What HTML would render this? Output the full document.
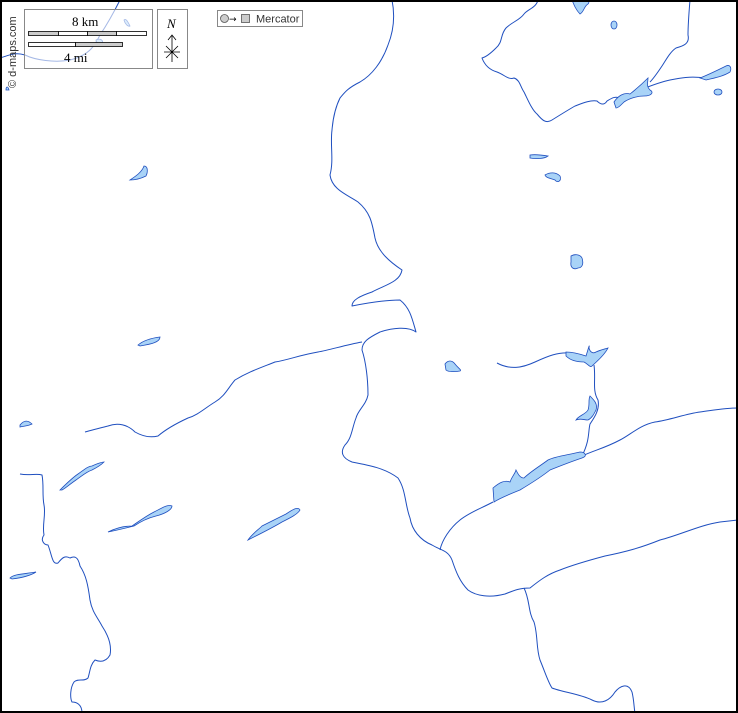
<!DOCTYPE html>
<html><head><meta charset="utf-8"><style>
html,body{margin:0;padding:0;background:#fff}
svg{display:block}
</style></head><body>
<svg width="738" height="713" viewBox="0 0 738 713" xmlns="http://www.w3.org/2000/svg">
<rect x="0" y="0" width="738" height="713" fill="#fff"/>
<g fill="none" stroke="#1f4fbf" stroke-width="1" stroke-linejoin="round">
<!-- main river -->
<path d="M392,0 C395,15 394,30 388,45 C382,62 372,75 360,82 C348,88 345,92 340,98 C335,108 333,118 332,130 C330,145 334,160 330,175 C332,190 348,195 358,202 C370,212 372,222 375,238 C378,252 390,262 402,270 C400,282 385,285 372,292 C360,296 352,300 352,306 C362,304 385,300 400,300 C410,308 412,318 416,332 C408,326 392,328 380,332 C368,338 362,342 362,350 C366,362 368,380 368,395 C366,405 358,410 356,418 C352,428 352,438 345,445 C340,452 342,458 352,462 C368,465 385,468 398,478 C406,490 405,505 410,518 C412,530 420,540 432,545 C440,550 448,550 452,560 C456,572 460,582 468,590 C476,596 490,598 505,594 C515,590 520,588 530,588 C540,580 548,574 560,570 C575,564 590,560 605,556 C625,552 640,548 660,540 C680,535 700,525 720,522 L738,520"/>
<!-- left branch -->
<path d="M362,342 C345,345 330,350 318,352 C300,355 288,360 275,362 C260,368 248,372 235,380 C228,388 225,396 215,402 C205,408 198,415 188,418 C175,424 165,430 158,436 C150,438 142,436 135,432 C128,425 118,422 108,426 C100,428 92,430 85,432"/>
<!-- lower-right river -->
<path d="M440,550 C442,540 450,528 460,520 C470,512 482,508 493,502"/>
<path d="M582,456 C595,450 605,448 620,440 C630,435 640,425 655,422 C670,420 685,414 700,412 C715,410 725,408 738,408"/>
<path d="M497,363 C510,370 522,368 535,362 C548,356 558,352 570,353"/>
<path d="M594,365 C596,380 592,390 598,400 C600,410 594,418 590,424 C588,432 590,440 582,456"/>
<!-- top right rivers -->
<path d="M538,0 C536,8 528,9 524,14 C520,20 512,22 506,28 C500,35 503,42 496,48 C490,54 486,57 482,58 C485,66 490,70 497,72 C505,75 508,80 514,78 C520,80 520,86 524,92 C528,100 532,110 537,114 C542,120 546,124 552,120 C560,115 568,110 575,106 C583,103 590,100 597,101 C600,104 604,106 607,101 C612,98 615,96 620,98"/>
<path d="M690,0 C689,12 688,25 688,35 C690,44 683,46 676,48 C670,52 666,60 662,66 C658,72 654,78 650,82"/>
<path d="M640,90 C650,86 660,82 670,80 C680,78 690,76 705,78"/>
<!-- bottom-left river -->
<path d="M20,474 C30,476 36,473 42,475 C44,485 42,495 44,505 C46,515 42,525 44,535 C40,540 44,545 48,545 C52,555 52,565 58,563 C62,558 65,555 70,558 C74,556 78,556 80,566 C86,575 88,585 90,600 C92,612 98,618 102,626 C108,635 112,645 110,655 C106,662 100,662 95,660 C90,665 90,672 88,678 C84,682 78,678 74,682 C70,688 70,698 72,702 C76,702 82,704 82,713"/>
<!-- bottom river -->
<path d="M524,588 C530,600 528,612 534,622 C538,635 536,648 540,660 C545,672 548,682 552,688 C562,692 580,694 592,700 C602,705 610,700 615,692 C620,686 628,682 632,692 C634,700 634,708 635,713"/>
<!-- top small river in legend -->
<path d="M120,0 C115,10 110,20 100,35 C95,45 90,55 70,60 C55,63 35,60 25,55 C15,52 10,55 0,58"/>
</g>
<g fill="#a9d3f7" stroke="#1f4fbf" stroke-width="0.8">
<path d="M493,488 C500,482 505,480 510,482 C512,476 515,474 516,470 C518,474 520,478 524,478 C530,472 540,466 548,460 C556,456 568,455 580,452 C585,452 588,456 582,458 C570,462 560,466 550,470 C540,478 530,484 520,490 C510,494 500,498 494,502 Z"/>
<path d="M566,352 C572,352 580,354 586,356 C588,350 590,342 589,348 C590,352 593,354 596,352 C600,350 605,349 608,348 C604,356 596,362 592,366 C590,368 588,364 584,362 C576,362 570,360 566,356 Z"/>
<path d="M590,396 C594,400 598,404 596,410 C594,414 592,418 588,420 C584,420 580,418 576,420 C578,416 586,414 588,410 C590,404 588,400 590,396 Z"/>
<path d="M614,102 C618,96 624,92 630,94 C635,90 640,86 648,78 C648,82 646,86 650,90 C654,92 652,96 644,96 C638,96 630,98 624,102 C620,106 618,108 616,108 Z"/>
<path d="M700,78 C710,74 718,70 726,66 C730,64 732,68 730,72 C724,76 715,78 706,80 Z"/>
<ellipse cx="718" cy="92" rx="4" ry="3"/>
<path d="M572,0 C574,5 576,10 580,14 C584,12 584,6 588,4 C590,2 588,0 586,0 Z"/>
<ellipse cx="614" cy="25" rx="3" ry="4"/>
<path d="M530,155 C536,154 542,155 548,156 C544,159 536,159 530,158 Z"/>
<path d="M545,175 C550,172 556,172 560,176 C562,180 558,184 555,180 C550,178 546,178 545,175 Z"/>
<path d="M571,256 C574,254 580,254 582,258 C584,264 582,268 578,268 C574,270 570,268 571,262 Z"/>
<path d="M445,364 C448,360 452,360 455,364 C458,368 462,370 460,371 C455,372 448,372 446,370 Z"/>
<path d="M130,180 C136,176 142,172 144,166 C148,166 148,172 146,176 C142,178 136,180 130,180 Z"/>
<path d="M138,345 C144,340 152,338 160,337 C160,342 152,344 140,346 Z"/>
<path d="M20,425 C24,420 28,420 32,424 C28,426 24,426 20,427 Z"/>
<path d="M60,490 C66,484 72,478 78,474 C84,470 88,466 92,466 C96,464 102,462 104,462 C100,466 96,468 92,470 C86,472 82,476 76,480 C70,484 66,488 62,490 Z"/>
<path d="M108,532 C116,528 124,526 132,526 C138,522 146,516 154,512 C162,508 168,504 172,506 C172,510 164,514 156,516 C148,518 140,522 134,526 C126,528 118,530 108,532 Z"/>
<path d="M248,540 C252,534 258,530 262,526 C270,522 278,518 286,514 C292,510 298,506 300,510 C298,514 290,518 282,522 C272,528 260,534 248,540 Z"/>
<path d="M10,578 C14,574 24,574 36,572 C30,576 20,578 12,579 Z"/>
<path d="M6,90 C6,86 8,86 9,90 Z"/>
<path d="M124,20 C126,18 128,22 130,26 C128,27 125,24 124,20 Z"/>
<path d="M96,40 C100,38 104,40 102,44 C98,44 96,42 96,40 Z"/>
</g>
<!-- legend -->
<rect x="24.5" y="9.5" width="128" height="59" fill="rgba(255,255,255,0.6)" stroke="#888"/>
<g font-family="Liberation Serif, serif" font-size="13" fill="#000">
<text x="72" y="26">8 km</text>
<text x="64" y="62">4 mi</text>
</g>
<g stroke="#000" stroke-width="0.8">
<rect x="28.5" y="31.5" width="30" height="4" fill="#ccc"/>
<rect x="58.5" y="31.5" width="29" height="4" fill="#fff"/>
<rect x="87.5" y="31.5" width="29" height="4" fill="#ccc"/>
<rect x="116.5" y="31.5" width="30" height="4" fill="#fff"/>
<rect x="28.5" y="42.5" width="47" height="4" fill="#fff"/>
<rect x="75.5" y="42.5" width="47" height="4" fill="#ccc"/>
</g>
<rect x="157.5" y="9.5" width="30" height="59" fill="#fff" stroke="#888"/>
<text x="167" y="28" font-family="Liberation Serif, serif" font-style="italic" font-size="13">N</text>
<g stroke="#000" stroke-width="0.8" fill="none">
<path d="M172,36 L172,62 M168,40 L172,35 L176,40 M164,52 L180,52 M166,46 L178,58 M178,46 L166,58"/>
</g>
<rect x="217.5" y="10.5" width="85" height="16" fill="#fff" stroke="#888"/>
<circle cx="224.5" cy="18.5" r="4" fill="#ccc" stroke="#555" stroke-width="0.8"/>
<text x="229" y="22" font-family="DejaVu Sans, sans-serif" font-size="9">→</text>
<rect x="241.5" y="14.5" width="8" height="8" fill="#ccc" stroke="#555" stroke-width="0.8"/>
<text x="256" y="22.5" font-family="Liberation Sans, sans-serif" font-size="11" fill="#333">Mercator</text>
<text transform="translate(16,88) rotate(-90)" font-family="Liberation Sans, sans-serif" font-size="11" fill="#333">© d-maps.com</text>
<rect x="1" y="1" width="736" height="711" fill="none" stroke="#000" stroke-width="2"/>
</svg>
</body></html>
